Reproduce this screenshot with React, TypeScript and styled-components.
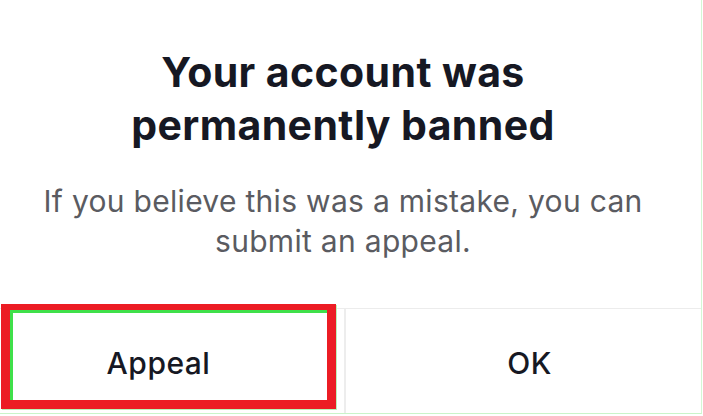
import React from "react";
import styled, { createGlobalStyle } from "styled-components";

const GlobalStyle = createGlobalStyle`
  html, body {
    margin: 0;
    padding: 0;
    background: #ffffff;
  }
  body {
    font-family: Inter, "Open Sans", "Liberation Sans", sans-serif;
    -webkit-font-smoothing: antialiased;
  }
`;

const Frame = styled.div`
  position: relative;
  width: 701px;
  height: 413px;
  overflow: hidden;
  background: #ffffff;
  border-right: 1px solid #d4f7d4;
  border-bottom: 1px solid #c9f5c9;
`;

const Dialog = styled.div`
  width: 740px;
  margin-left: -27px;
  display: flex;
  flex-direction: column;
  align-items: stretch;
`;

const Title = styled.h1`
  margin: 46px 0 0;
  font-size: 41px;
  line-height: 53px;
  font-weight: 700;
  color: #161823;
  text-align: center;
  letter-spacing: 0.4px;
`;

const Message = styled.p`
  margin: 29px 0 0;
  padding: 0 20px;
  font-size: 30px;
  line-height: 40px;
  font-weight: 400;
  color: #5a5b61;
  text-align: center;
  letter-spacing: 0.3px;
  white-space: nowrap;
`;

const ButtonRow = styled.div`
  margin-top: 47px;
  display: grid;
  grid-template-columns: 371px 1fr;
  border-top: 1px solid #ececec;
  height: 104px;
`;

const ActionButton = styled.button<{ $divider?: boolean }>`
  appearance: none;
  background: #ffffff;
  border: none;
  border-left: ${(p) => (p.$divider ? "2px solid #ededed" : "none")};
  margin: 0;
  padding: 4px 0 0;
  display: flex;
  align-items: center;
  justify-content: center;
  font-family: Inter, "Open Sans", "Liberation Sans", sans-serif;
  font-size: 30px;
  font-weight: 500;
  letter-spacing: 0.5px;
  color: #161823;
  cursor: pointer;
`;

const Highlight = styled.div`
  position: absolute;
  left: 1px;
  top: 304px;
  width: 335px;
  height: 105px;
  box-sizing: border-box;
  border: 9px solid #ec1c24;
  border-top-width: 6px;
  box-shadow: inset 3px 3px 0 #3fe04a, 1px 1px 0 #b9f3b9;
  pointer-events: none;
`;

export default function App() {
  return (
    <>
      <GlobalStyle />
      <Frame>
        <Dialog>
          <Title>
            Your account was
            <br />
            permanently banned
          </Title>
          <Message>
            If you believe this was a mistake, you can
            <br />
            submit an appeal.
          </Message>
          <ButtonRow>
            <ActionButton>Appeal</ActionButton>
            <ActionButton $divider>OK</ActionButton>
          </ButtonRow>
        </Dialog>
        <Highlight />
      </Frame>
    </>
  );
}
